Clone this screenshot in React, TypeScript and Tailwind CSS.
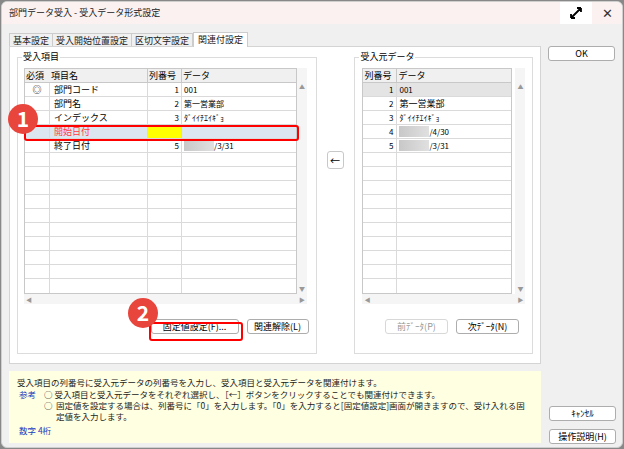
import React from "react";

const F = { fontFamily: '"Noto Sans CJK JP", "Noto Sans", sans-serif' };

const leftRows: [string, string, string, string | null][] = [
  ["◎", "部門コード", "1", "001"],
  ["", "部門名", "2", "第一営業部"],
  ["", "インデックス", "3", "ﾀﾞｲｲﾁｴｲｷﾞｮ"],
  ["", "開始日付", "", ""],
  ["", "終了日付", "5", "#/3/31"],
];
const rightRows = [
  ["1", "001"],
  ["2", "第一営業部"],
  ["3", "ﾀﾞｲｲﾁｴｲｷﾞｮ"],
  ["4", "#/4/30"],
  ["5", "#/3/31"],
];

function Data({ v }: { v: string | null }) {
  if (!v) return null;
  if (v.startsWith("#"))
    return (
      <span className="flex items-center">
        <span className="inline-block w-[30px] h-[11px] bg-gradient-to-r from-[#c8c8c8] to-[#e0e0e0]" />
        {v.slice(1)}
      </span>
    );
  return <span>{v}</span>;
}

function Btn({ children, cls = "" }: { children: React.ReactNode; cls?: string }) {
  return (
    <div className={`h-[15px] border border-[#adadad] rounded-[3px] bg-white flex items-center justify-center text-[9px] ${cls}`}>
      {children}
    </div>
  );
}

function Badge({ n }: { n: string }) {
  return (
    <div className="absolute w-[30px] h-[30px] rounded-full bg-[#e8453c] text-white text-[21px] font-bold flex items-center justify-center" style={{ ...F }}>
      {n}
    </div>
  );
}

export default function App() {
  const emptyL = Array.from({ length: 10 });
  const emptyR = Array.from({ length: 10 });
  return (
    <div className="w-[624px] h-[449px] bg-[#888] p-[1px]" style={F}>
      <div className="w-full h-full bg-[#f0f0f0] relative overflow-hidden rounded-[6px] border border-[#cfcfcf]">
        <div className="h-[22px] bg-[#fbf1f1] flex items-center pl-[7px] text-[9px] text-[#222]">
          <span>部門データ受入 - 受入データ形式設定</span>
          <div className="ml-auto flex items-center h-full">
            <div className="w-[32px] h-[22px] bg-white flex items-center justify-center">
              <svg width="14" height="14" viewBox="0 0 14 14"><path d="M2 12L12 2M2 12v-4M2 12h4M12 2h-4M12 2v4" stroke="#000" strokeWidth="1.8" fill="none" /></svg>
            </div>
            <div className="w-[30px] flex items-center justify-center text-[13px] text-[#333]">✕</div>
          </div>
        </div>
        <div className="flex px-[7px] pt-[7px] gap-[7px]">
          <div className="w-[532px]">
            <div className="flex items-end h-[15px] text-[9px] text-[#222]">
              <div className="px-[3px] h-[13px] border border-b-0 border-[#ccc] bg-[#f0f0f0]">基本設定</div>
              <div className="px-[3px] h-[13px] border border-b-0 border-l-0 border-[#ccc] bg-[#f0f0f0]">受入開始位置設定</div>
              <div className="px-[3px] h-[13px] border border-b-0 border-l-0 border-[#ccc] bg-[#f0f0f0]">区切文字設定</div>
              <div className="px-[4px] h-[15px] border border-b-0 border-[#ccc] bg-white relative top-[1px]">関連付設定</div>
            </div>
            <div className="h-[318px] bg-white border border-[#d4d4d4] flex px-[7px] pt-[5px] gap-[10px]">
              <div className="relative w-[302px] h-[297px] mt-[5px] border border-[#dcdcdc]">
                <span className="absolute -top-[7px] left-[4px] bg-white px-[1px] text-[9px] leading-[12px]">受入項目</span>
                <div className="flex mt-[10px] ml-[6px]">
                  <div className="w-[273px] border border-[#c8c8c8] text-[9px]">
                    <div className="flex h-[14px] bg-[#f0f0f0] border-b border-[#c8c8c8] items-center">
                      <div className="w-[25px] pl-[1px]">必須</div>
                      <div className="w-[98px] pl-[1px] border-r border-[#c8c8c8]">項目名</div>
                      <div className="w-[34px] pl-[1px] border-r border-[#c8c8c8]">列番号</div>
                      <div className="flex-1 pl-[1px]">データ</div>
                    </div>
                    {leftRows.map((r, i) => (
                      <div key={i} className={`flex h-[14px] border-b border-[#dadada] items-center ${i === 3 ? "bg-[#dce6f1]" : ""}`}>
                        <div className="w-[25px] h-full text-center border-r border-[#dadada] leading-[14px]">{r[0]}</div>
                        <div className={`w-[98px] h-full pl-[4px] border-r border-[#dadada] leading-[14px] ${i === 3 ? "text-[#ff3c3c]" : ""}`}>{r[1]}</div>
                        <div className={`w-[34px] h-full pr-[2px] text-right border-r border-[#dadada] leading-[14px] text-[8px] ${i === 3 ? "bg-[#ffff00]" : ""}`}>{r[2]}</div>
                        <div className="flex-1 pl-[2px] text-[8px]"><Data v={r[3]} /></div>
                      </div>
                    ))}
                    {emptyL.map((_, i) => (
                      <div key={i} className="flex h-[14px] border-b border-[#dadada] last:border-b-0">
                        <div className="w-[25px] border-r border-[#dadada]" />
                        <div className="w-[98px] border-r border-[#dadada]" />
                        <div className="w-[34px] border-r border-[#dadada]" />
                      </div>
                    ))}
                  </div>
                  <div className="w-[10px] bg-[#f5f5f5] flex flex-col items-center justify-between text-[6px] text-[#999] pt-[14px] pb-[1px]">
                    <span>▲</span><span>▼</span>
                  </div>
                </div>
                <div className="ml-[6px] w-[283px] h-[10px] bg-[#f5f5f5] flex items-center justify-between px-[2px] text-[6px] text-[#999]">
                  <span>◀</span><span>▶</span>
                </div>
                <div className="flex justify-end gap-[8px] mt-[15px] mr-[7px]">
                  <Btn cls="w-[88px]">固定値設定(F)...</Btn>
                  <Btn cls="w-[62px]">関連解除(L)</Btn>
                </div>
              </div>
              <div className="w-[18px] flex flex-col pt-[99px]">
                <div className="w-[17px] h-[18px] border border-[#c8c8c8] rounded-[3px] bg-white flex items-center justify-center text-[10px]">←</div>
              </div>
              <div className="relative w-[180px] h-[297px] mt-[5px] border border-[#dcdcdc]">
                <span className="absolute -top-[7px] left-[4px] bg-white px-[1px] text-[9px] leading-[12px]">受入元データ</span>
                <div className="flex mt-[10px] ml-[7px]">
                  <div className="w-[150px] border border-[#c8c8c8] text-[9px]">
                    <div className="flex h-[14px] bg-[#f0f0f0] border-b border-[#c8c8c8] items-center">
                      <div className="w-[34px] pl-[1px] border-r border-[#c8c8c8]">列番号</div>
                      <div className="flex-1 pl-[1px]">データ</div>
                    </div>
                    {rightRows.map((r, i) => (
                      <div key={i} className={`flex h-[14px] border-b border-[#dadada] items-center text-[8px] ${i === 0 ? "bg-[#e4e4e4]" : ""}`}>
                        <div className="w-[34px] h-full pr-[3px] text-right border-r border-[#dadada] leading-[14px]">{r[0]}</div>
                        <div className={`flex-1 pl-[2px] ${r[1] === "第一営業部" ? "text-[9px]" : ""}`}><Data v={r[1]} /></div>
                      </div>
                    ))}
                    {emptyR.map((_, i) => (
                      <div key={i} className="flex h-[14px] border-b border-[#dadada] last:border-b-0">
                        <div className="w-[34px] border-r border-[#dadada]" />
                      </div>
                    ))}
                  </div>
                  <div className="w-[10px] ml-[3px] bg-[#f5f5f5] flex flex-col items-center justify-between text-[6px] text-[#999] pt-[14px] pb-[1px]">
                    <span>▲</span><span>▼</span>
                  </div>
                </div>
                <div className="ml-[7px] w-[163px] h-[10px] bg-[#f5f5f5] flex items-center justify-between px-[2px] text-[6px] text-[#999]">
                  <span>◀</span><span>▶</span>
                </div>
                <div className="flex justify-end gap-[8px] mt-[15px] mr-[13px]">
                  <Btn cls="w-[63px] text-[#999] border-[#d8d8d8]">前ﾃﾞｰﾀ(P)</Btn>
                  <Btn cls="w-[63px]">次ﾃﾞｰﾀ(N)</Btn>
                </div>
              </div>
            </div>
            <div className="mt-[7px] h-[72px] bg-[#ffffe1] text-[8.5px] leading-[11px] px-[8px] pt-[6px] text-[#222]">
              <div>受入項目の列番号に受入元データの列番号を入力し、受入項目と受入元データを関連付けます。</div>
              <div className="flex mt-[1px]">
                <span className="w-[27px] text-[#2040c0] pl-[2px]">参考</span>
                <div className="flex-1">
                  <div>○ 受入項目と受入元データをそれぞれ選択し、［←］ボタンをクリックすることでも関連付けできます。</div>
                  <div className="flex"><span className="w-[12px]">○</span><span className="flex-1">固定値を設定する場合は、列番号に「0」を入力します。「0」を入力すると[固定値設定]画面が開きますので、受け入れる固定値を入力します。</span></div>
                </div>
              </div>
              <div className="text-[#2040c0] mt-[3px] pl-[2px]">数字 4桁</div>
            </div>
          </div>
          <div className="w-[67px] flex flex-col pt-[15px]">
            <Btn>OK</Btn>
          </div>
        </div>
        <div className="absolute left-[547px] top-[404px] w-[67px] flex flex-col gap-[8px]">
          <Btn>ｷｬﾝｾﾙ</Btn>
          <Btn>操作説明(H)</Btn>
        </div>
        <div className="absolute left-[22px] top-[123px] w-[275px] h-[16px] border-[2px] border-[#ff0000] rounded-[3px]" />
        <div className="absolute left-[147px] top-[320px] w-[94px] h-[19px] border-[2px] border-[#ff0000] rounded-[3px]" />
        <div className="absolute left-[6px] top-[102px]"><Badge n="1" /></div>
        <div className="absolute left-[126px] top-[296px]"><Badge n="2" /></div>
      </div>
    </div>
  );
}
